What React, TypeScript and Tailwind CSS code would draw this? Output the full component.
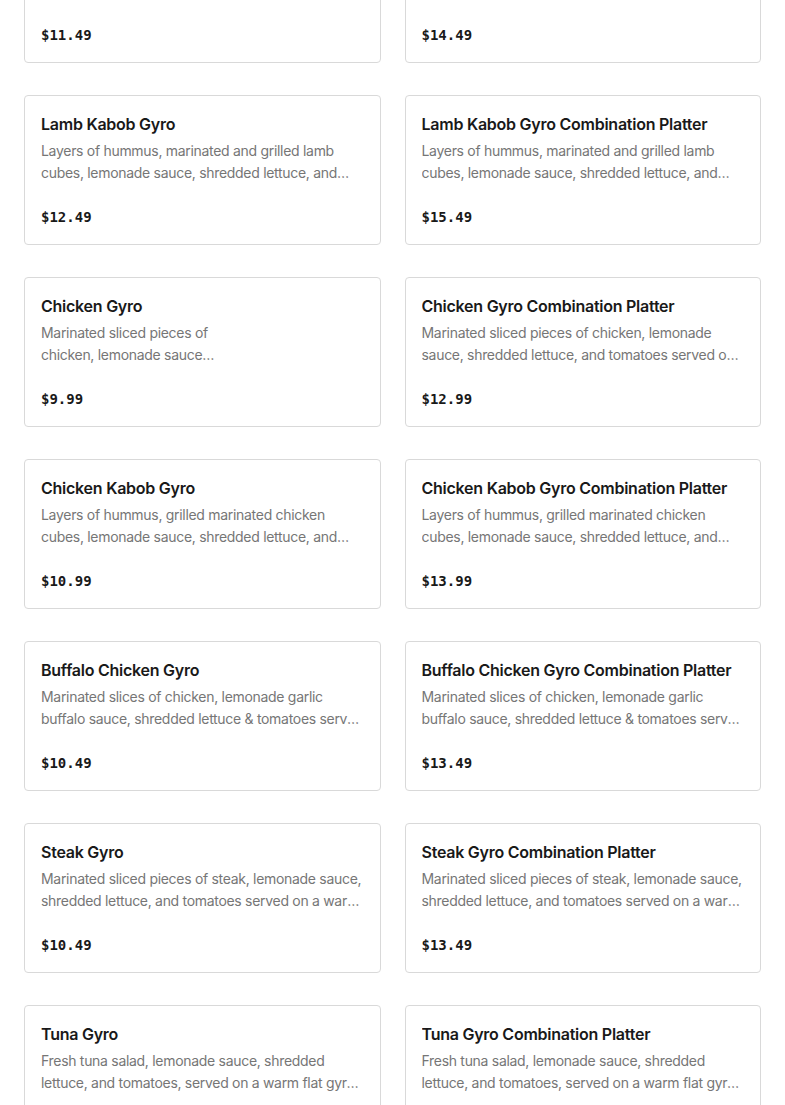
const ITEMS: { name: string; desc: string; price: string; narrow?: boolean }[] = [
  {
    name: "Lamb Gyro",
    desc: "Marinated sliced pieces of lamb, lemonade sauce, shredded lettuce, and tomatoes served on a warm flat gyro bread.",
    price: "$11.49",
  },
  {
    name: "Lamb Gyro Combination Platter",
    desc: "Marinated sliced pieces of lamb, lemonade sauce, shredded lettuce, and tomatoes served on a warm flat gyro bread.",
    price: "$14.49",
  },
  {
    name: "Lamb Kabob Gyro",
    desc: "Layers of hummus, marinated and grilled lamb cubes, lemonade sauce, shredded lettuce, and tomatoes.",
    price: "$12.49",
  },
  {
    name: "Lamb Kabob Gyro Combination Platter",
    desc: "Layers of hummus, marinated and grilled lamb cubes, lemonade sauce, shredded lettuce, and tomatoes.",
    price: "$15.49",
  },
  {
    name: "Chicken Gyro",
    desc: "Marinated sliced pieces of chicken, lemonade sauce shredded lettuce, and tomatoes.",
    price: "$9.99",
    narrow: true,
  },
  {
    name: "Chicken Gyro Combination Platter",
    desc: "Marinated sliced pieces of chicken, lemonade sauce, shredded lettuce, and tomatoes served on a warm flat gyro bread.",
    price: "$12.99",
  },
  {
    name: "Chicken Kabob Gyro",
    desc: "Layers of hummus, grilled marinated chicken cubes, lemonade sauce, shredded lettuce, and tomatoes.",
    price: "$10.99",
  },
  {
    name: "Chicken Kabob Gyro Combination Platter",
    desc: "Layers of hummus, grilled marinated chicken cubes, lemonade sauce, shredded lettuce, and tomatoes.",
    price: "$13.99",
  },
  {
    name: "Buffalo Chicken Gyro",
    desc: "Marinated slices of chicken, lemonade garlic buffalo sauce, shredded lettuce & tomatoes served on a warm flat gyro bread.",
    price: "$10.49",
  },
  {
    name: "Buffalo Chicken Gyro Combination Platter",
    desc: "Marinated slices of chicken, lemonade garlic buffalo sauce, shredded lettuce & tomatoes served on a warm flat gyro bread.",
    price: "$13.49",
  },
  {
    name: "Steak Gyro",
    desc: "Marinated sliced pieces of steak, lemonade sauce, shredded lettuce, and tomatoes served on a warm flat gyro bread.",
    price: "$10.49",
  },
  {
    name: "Steak Gyro Combination Platter",
    desc: "Marinated sliced pieces of steak, lemonade sauce, shredded lettuce, and tomatoes served on a warm flat gyro bread.",
    price: "$13.49",
  },
  {
    name: "Tuna Gyro",
    desc: "Fresh tuna salad, lemonade sauce, shredded lettuce, and tomatoes, served on a warm flat gyro bread.",
    price: "$9.99",
  },
  {
    name: "Tuna Gyro Combination Platter",
    desc: "Fresh tuna salad, lemonade sauce, shredded lettuce, and tomatoes, served on a warm flat gyro bread.",
    price: "$12.99",
  },
];

function MenuCard({ item }: { item: (typeof ITEMS)[number] }) {
  return (
    <div className="flex h-[150px] flex-col rounded border border-[#d9d9d9] bg-white px-4 pt-4">
      <h3 className="truncate text-base leading-6 font-semibold tracking-[-0.25px] text-[#191919]">
        {item.name}
      </h3>
      <p
        className={
          item.narrow
            ? "mt-[4px] line-clamp-2 max-w-[190px] text-sm leading-[22px] tracking-[-0.3px] text-[#767676]"
            : "mt-[4px] line-clamp-2 text-sm leading-[22px] tracking-[-0.3px] text-[#767676]"
        }
      >
        {item.desc}
      </p>
      <div className="mt-auto mb-[17px] font-['DejaVu_Sans_Mono',monospace] text-sm leading-5 font-bold text-[#191919]">
        {item.price}
      </div>
    </div>
  );
}

export default function App() {
  return (
    <div className="h-[1105px] overflow-hidden bg-white font-['Inter','Noto_Sans',sans-serif]">
      <div className="-mt-[87px] grid grid-cols-2 gap-x-6 gap-y-8 px-6">
        {ITEMS.map((item) => (
          <MenuCard key={item.name} item={item} />
        ))}
      </div>
    </div>
  );
}
